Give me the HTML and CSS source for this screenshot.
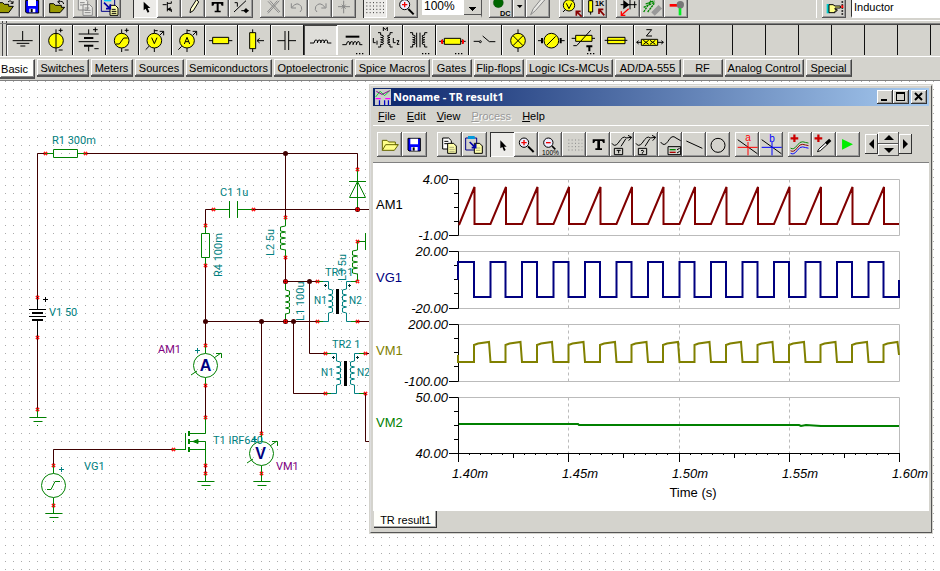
FILE: index.html
```html
<!DOCTYPE html>
<html lang="en">
<head>
<meta charset="utf-8">
<title>Schematic Editor</title>
<link rel="stylesheet" href="styles.css">
</head>
<body>
<header class="chrome">
  <div class="toolbar">
    <div class="group first">
      <button class="tool" aria-label="Open"><svg viewBox="-12 -18 72 72"><path class="folder" d="M-4 38V8H8l5 5H26V19H40L26 38Z"/><path class="k" d="M24 6q8-8 14 4m-6 0h7V3"/></svg></button>
      <button class="tool" aria-label="Save"><svg viewBox="60 -18 72 72"><path fill="#00f" stroke="#000" stroke-width="3" d="M77 1H116V39H80L77 36Z"/><path fill="#fff" d="M84 0h24v18H84zM88 26h18v11H88z"/><path fill="#000" d="M92 27h6v10h-6z"/></svg></button>
      <button class="tool" aria-label="Open example"><svg viewBox="132 -18 72 72"><path class="folder" d="M149 38V11h12l5 5h18v6h10L180 38Z"/><path class="k" d="M191 12q-2-12-16-6m4-6-6 6 7 5"/></svg></button>
    </div>
    <div class="group g4">
      <button class="tool" aria-label="Copy"><svg viewBox="219 -18 72 72"><path class="dim" fill="#e9e9e5" d="M235-4h20l8 8v26h-28zM249 14h20l8 8v24h-28zM254 24h14m-14 7h18m-18 7h18M240 8h14m-14 7h8"/></svg></button>
      <button class="tool" aria-label="Paste"><svg viewBox="291 -18 72 72"><path fill="#d4d3cd" stroke="#008" stroke-width="3" d="M304-2h40v36h-40z"/><path fill="#0cf" d="M312-6h22V4h-22z"/><path fill="#ffa" stroke="#000" stroke-width="3" d="M330 16h16l8 8v22h-24z"/><path class="k" d="M335 28h12m-12 6h14m-14 6h14"/><path stroke="#00a" stroke-width="5" d="m312 8 18 18m-12 0h13V13" fill="none"/></svg></button>
    </div>
    <div class="group g12">
      <button class="tool on" aria-label="Select"><svg viewBox="399 -18 72 72"><path d="M431 5v26l6-5 6 12 5-3-5-11h8z"/></svg></button>
      <button class="tool" aria-label="Last component"><svg viewBox="471 -18 72 72"><path class="k" d="M488 14h12m2-8v28m0-24h12m-12 18h12v8m0-26v-6"/><path d="m501 28 11-7v13z"/></svg></button>
      <button class="tool" aria-label="Wire"><svg viewBox="543 -18 72 72"><path class="k" fill="#fff" d="m590-2-18 28-2 12 10-6L596 6Z"/></svg></button>
      <button class="tool" aria-label="Text"><svg viewBox="615 -18 72 72"><path d="M635 6h35v11h-5l-3-6h-6v21h6v5h-18v-5h6V11h-7l-3 6h-5z"/></svg></button>
      <button class="tool" aria-label="Hide values"><svg viewBox="687 -18 72 72"><path class="k" d="m702 36 36-34M704 8h8v12m12 12h22"/><path d="m738 24 8 8-8 8-8-8z"/></svg></button>
    </div>
    <div class="group g7">
      <button class="tool" aria-label="Delete"><svg viewBox="780 -18 72 72"><path class="dim" d="m804 4 32 34M810 2l30 34M838 2l-34 38M832 2l-30 34"/></svg></button>
      <button class="tool" aria-label="Undo"><svg viewBox="852 -18 72 72"><path class="dim" d="M876 22q16-20 28-2 4 10-4 16M874 10v14h14"/></svg></button>
      <button class="tool" aria-label="Redo"><svg viewBox="-6 -18 72 72"><path class="dim" d="M45 22q-16-20-28-2-4 10 4 16M48 10v14H34"/></svg></button>
      <button class="tool" aria-label="Node"><svg viewBox="66 -18 72 72"><path class="dim" d="M84 20h36M101 2v38m-6-26 12 12m0-12-12 12"/></svg></button>
    </div>
    <div class="group g7">
      <button class="tool on" aria-label="Grid"><svg viewBox="163 -18 72 72"><path stroke="#333" stroke-width="3" stroke-dasharray="3 7" d="M173 8h55m-55 10h55m-55 10h55m-55 10h55"/></svg></button>
    </div>
    <div class="group g7">
      <button class="tool" aria-label="Zoom"><svg viewBox="256 -18 72 72"><circle cx="288" cy="14" r="15" fill="#eef" stroke="#000" stroke-width="3"/><path stroke="#e00" stroke-width="4" d="M280 14h16m-8-8v16"/><path stroke="#000" stroke-width="6" d="m299 27 16 16"/></svg></button>
      <select class="zoom" aria-label="Zoom level"><option>100%</option></select>
    </div>
    <div class="group g7">
      <button class="tool" aria-label="DC analysis"><svg viewBox="540 -18 72 72"><circle cx="568" cy="8" r="15" fill="#060" stroke="#141"/><text x="573" y="47" class="cap">DC</text></svg></button>
      <button class="tool slim" aria-label="Analysis menu"><svg viewBox="615 -18 36 72"><path d="M625 15h17l-8 9z"/></svg></button>
      <button class="tool" aria-label="Probe"><svg viewBox="654 -18 72 72"><path class="dim" fill="#eee" d="m668 44 8-18 26-32 8 6-28 32Z"/></svg></button>
    </div>
    <div class="group g9">
      <button class="tool" aria-label="Voltmeter pick"><svg viewBox="756 -18 72 72"><circle class="y" cx="786" cy="16" r="17"/><path class="k" d="m778 10 8 16 8-16M768 36l8-8m20-24 8-8"/><path stroke="#800" stroke-width="5" fill="none" d="m824 50-16-16m0 13V34h13"/></svg></button>
      <button class="tool" aria-label="Resistor pick"><svg viewBox="828 -18 72 72"><path class="y" d="M845 2h12v34h-12z"/><path class="k" d="M851-8V2m0 34v8"/><text x="864" y="19" class="cap">1K</text><path stroke="#800" stroke-width="5" fill="none" d="m892 46-16-18m0 14V28h13"/></svg></button>
    </div>
    <div class="group g9">
      <button class="tool" aria-label="Diode pick"><svg viewBox="-2 -18 72 72"><path d="M20 0v28l18-14z"/><path class="k" d="M12 14h48M40 0v28M54 4v20"/><path stroke="#f00" stroke-width="4" fill="none" d="M36 26 14 46m0-12v12h12"/></svg></button>
      <button class="tool" aria-label="Spray"><svg viewBox="73 -18 72 72"><path stroke="#080" stroke-width="4" stroke-dasharray="7 2" d="M84 36 106 2M90 12 116 2M84 22l34-16M96 36l20-26"/><path stroke="#999" stroke-width="15" d="m112 42 22-22"/></svg></button>
      <button class="tool" aria-label="Logic probe"><svg viewBox="148 -18 72 72"><path stroke="#f00" stroke-width="8" d="M165 16h22"/><path stroke="#0e2" stroke-width="8" d="M196 24v22"/><circle cx="197" cy="14" r="11" fill="#777"/></svg></button>
    </div>
    <div class="group find">
      <button class="tool" aria-label="Find component"><svg viewBox="621 -18 72 72"><path fill="#0cc" d="M635 12h8v28h-8z"/><path fill="#ff8" stroke="#000" stroke-width="3" d="M642 14h12l6 4h16v6h-16v4h6v5h-6v5h-18Z"/><path stroke="#000" stroke-width="5" stroke-dasharray="4 5" d="M682 4v40"/><path stroke="#f00" stroke-width="6" d="M682 16v8"/></svg></button>
      <input class="search" type="text" value="Inductor" aria-label="Component name">
    </div>
  </div>

  <div class="palette">
    <button class="part" aria-label="Ground"><svg viewBox="21 75 99 90"><path class="k" d="M68 93v29M38 122h60M50 130h38M61 138h15"/></svg></button>
    <button class="part" aria-label="Voltage source"><svg viewBox="120 75 99 90"><circle class="y" cx="168" cy="122" r="22"/><path class="k" d="M168 88v68M176 91h12m-6-6v12M176 150h12"/></svg></button>
    <button class="part" aria-label="Battery"><svg viewBox="219 75 99 90"><path class="k" d="M266 88v14M236 102h60M236 125h60M266 139v15M279 89h14m-7-7v14M283 146h13"/><path class="kk" d="M252 114h28M252 137h28"/></svg></button>
    <button class="part" aria-label="Generator"><svg viewBox="318 75 99 90"><circle class="y" cx="365" cy="122" r="22"/><path class="k" d="M365 88v12m0 44v12M348 132h10l13-18h12M374 91h12m-6-6v12M374 150h12"/></svg></button>
    <button class="part" aria-label="Voltmeter"><svg viewBox="417 75 99 90"><circle class="y" cx="463" cy="122" r="22"/><path class="k" d="m455 113 8 18 8-18M463 88v12m0 44v12M437 149l10-10M479 106l12-12m-12 0h12v12M463 92h10"/></svg></button>
    <button class="part" aria-label="Ammeter"><svg viewBox="516 75 99 90"><circle class="y" cx="561" cy="122" r="22"/><path class="k" d="m553 132 8-20 8 20m-13-7h10M561 88v12m0 44v12M535 149l10-10M578 106l12-12m-12 0h12v12M561 92h10"/></svg></button>
    <button class="part" aria-label="Resistor"><svg viewBox="615 75 99 90"><path class="k" d="M627 122h70"/><path class="y" d="M638 112h48v19h-48z"/></svg></button>
    <button class="part" aria-label="Potentiometer"><svg viewBox="714 75 99 90"><path class="k" d="M758 88v68M772 122h20m-13-7-8 7 8 7"/><path class="y" d="M749 98h18v48h-18z"/></svg></button>
    <button class="part" aria-label="Capacitor"><svg viewBox="813 75 99 90"><path class="k" d="M832 122h23M855 93v57M866 93v57M866 122h22"/></svg></button>
    <button class="part on" aria-label="Inductor"><svg viewBox="-18 75 99 90"><path class="k" d="M0 129h12q2-12 8-9 4 2 2 9q2-12 8-9 4 2 2 9q2-12 8-9 4 2 2 9q2-12 8-9 4 2 2 9h12"/></svg></button>
    <button class="part" aria-label="Core inductor"><svg viewBox="81 75 99 90"><path class="kk" d="M107 110h41"/><path class="k" d="M97 134h12q2-12 8-9 4 2 2 9q2-12 8-9 4 2 2 9q2-12 8-9 4 2 2 9q2-12 8-9 4 2 2 9h8"/><path class="dots" d="M138 161h23"/></svg></button>
    <button class="part" aria-label="Coupled inductors"><svg viewBox="180 75 99 90"><path class="k" d="M220 93V82l6 7 6-7v11M190 114v14h7M201 122v12M250 114v14h7M260 122h7l-6 11h7M204 98h8v7q10 0 8 6-2 3-8 1q10 0 8 6-2 3-8 1q10 0 8 6-2 3-8 1q10 0 8 6-2 3-8 1v8h-8M248 98h-8v7q-10 0-6 6 2 3 6 1q-10 0-6 6 2 3 6 1q-10 0-6 6 2 3 6 1q-10 0-6 6 2 3 6 1v8h8"/></svg></button>
    <button class="part" aria-label="Transformer"><svg viewBox="279 75 99 90"><path class="k" d="M320 98v44M330 98v44M300 98h8v7q10 0 7 6-2 3-7 1q10 0 7 6-2 3-7 1q10 0 7 6-2 3-7 1q10 0 7 6-2 3-7 1v8h-8M352 98h-8v7q-10 0-7 6 2 3 7 1q-10 0-7 6 2 3 7 1q-10 0-7 6 2 3 7 1q-10 0-7 6 2 3 7 1v8h8"/><path class="dots" d="M336 161h23"/></svg></button>
    <button class="part" aria-label="Thermal resistor"><svg viewBox="378 75 99 90"><path class="k" d="M387 124h80M398 118v14M457 118v14"/><path class="y" d="M403 115h49v18h-49z"/><path stroke="#f00" stroke-width="6" d="M396 119v12M459 119v12"/><path class="dots" d="M435 161h23"/></svg></button>
    <button class="part" aria-label="Switch"><svg viewBox="477 75 99 90"><path class="k" d="M491 124h16M518 108l20 17h18"/><circle class="k" cx="511" cy="125" r="3"/></svg></button>
    <button class="part" aria-label="Bulb"><svg viewBox="576 75 99 90"><circle class="y" cx="624" cy="122" r="22"/><path class="k" d="M624 88v12m0 44v12M609 107l30 30m0-30-30 30"/></svg></button>
    <button class="part" aria-label="Motor"><svg viewBox="675 75 99 90"><circle class="y" cx="724" cy="122" r="22"/><path class="k" d="M684 122h14m52 0h14M711 135l26-26"/><path class="kk" d="M696 114v16M752 114v16"/></svg></button>
    <button class="part" aria-label="Thermistor"><svg viewBox="774 75 99 90"><path class="k" d="M785 115h70"/><path class="y" d="M797 106h49v18h-49z"/><path class="k" d="M790 137h10l42-46"/><path class="kk" d="M829 139h18M838 139v15"/><path class="dots" d="M831 161h23"/></svg></button>
    <button class="part" aria-label="Fuse"><svg viewBox="873 75 99 90"><path class="y" d="M893 112h52v19h-52z"/><path class="k" d="M884 121h68"/></svg></button>
    <button class="part" aria-label="Impedance"><svg viewBox="42 75 99 90"><path class="k" d="M79 89h16L79 108h17M50 127h80m-74-5-6 5 6 5m68-10 6 5-6 5"/><path class="y" d="M64 118h49v18H64z"/><path class="k" d="m70 121 16 12m0-12-16 12m20-12 16 12m0-12-16 12"/></svg></button>
    <button class="part" aria-label="Empty slot 1"></button><button class="part" aria-label="Empty slot 2"></button><button class="part" aria-label="Empty slot 3"></button><button class="part" aria-label="Empty slot 4"></button><button class="part" aria-label="Empty slot 5"></button><button class="part" aria-label="Empty slot 6"></button><button class="part" aria-label="Empty slot 7"></button><button class="part" aria-label="Empty slot 8"></button><button class="part" aria-label="Empty slot 9"></button>
  </div>

  <nav class="tabs">
    <button class="tab current">Basic</button><button class="tab">Switches</button><button class="tab">Meters</button><button class="tab">Sources</button><button class="tab">Semiconductors</button><button class="tab">Optoelectronic</button><button class="tab">Spice Macros</button><button class="tab">Gates</button><button class="tab">Flip-flops</button><button class="tab">Logic ICs-MCUs</button><button class="tab">AD/DA-555</button><button class="tab">RF</button><button class="tab">Analog Control</button><button class="tab">Special</button>
  </nav>
</header>

<main class="canvas">
  <svg class="schematic" role="img" aria-label="Circuit schematic">
    <defs>
      <path id="pin" d="M-1-1h4M-1 1h4M0-2v4M2-2v4" stroke="#f00" fill="none" stroke-width="1" opacity=".7"/>
      <g id="gnd"><path d="M0 0v8M-8 8.500h17M-4 12.500h9M0 16v1" class="green"/></g>
      <path id="plus" d="M-2 0h5M.5-2.500v5"/>
    </defs>
    <g transform="translate(0 -81)">
      <g class="wire">
        <path d="M45 153.500H37.500V297M86 153.500H357.500V170M37.500 337V409M285.500 153V217M205.500 225V209.500H213M253 209.500H370M205.500 265V345M285.500 257V281.500H317M205.500 321.500H317M357 321.500H370M309.500 281V353.500H325M293.500 321V393.500H325M365.500 353.500H370M365.500 393V441.500H370M205.500 385V417M205.500 465V474M261.500 321V433M173 449.500H53.500V465"/>
      </g>
      <g class="black"><path d="M37.500 297V309M29 309.500H46M29 316.500H46M37.500 320V337M43 299.500h5M45.500 297v5"/><path stroke-width="2" d="M32 313H43M32 320H43"/></g>
      <g class="green">
        <path d="M45 153.500H53M78 153.500H86M53.500 149.500h24v8h-24zM213 209.500H229.500M229.500 201V218M237.500 201V218M237.500 209.500H253M205.500 225V233M205.500 258V265M201.500 233.500h8v24h-8z"/>
        <path d="M357.500 169V209M349 181.500H366M349.500 197.500h16l-8-16z"/>
        <path d="M285.500 217V226l-5 1v4l5 1-5 1v4l5 1-5 1v4l5 1-5 1v4l5 1V257"/>
        <path d="M285.500 281V290l4 1v4l-4 1 4 1v4l-4 1 4 1v4l-4 1 4 1v4l-4 1V321"/>
        <path d="M357.500 241V250l-5 1v4l5 1-5 1v4l5 1-5 1v4l5 1-5 1v4l5 1V281M357 241.500H365.500M365.500 233V250"/>
        <path d="M205.500 345V353M205.500 378V385M261.500 433V441M261.500 466V474M53.500 465V473M53.500 498V505"/>
        <circle cx="205.500" cy="365.500" r="12"/><circle cx="261.500" cy="453.500" r="12"/><circle cx="53.500" cy="485.500" r="12"/>
        <path d="M47 489.500h4l4-8h5M191 375l6-4M214 358l7-5M216 353.500h5.500V358M247 463l6-4M270 446l7-5M272 441.500h5.500V446"/>
        <path d="M205.500 417V433.500H189M185.500 433V450M173 449.500H185.500M189 441.500H205.500V465M189 449.500H205.500"/>
        <path stroke-width="2" d="M189 431v5M189 439v5M189 447v5"/><path fill="#008000" d="m193 441.500 5-2v4z"/>
      </g>
      <use href="#gnd" x="37.500" y="409"/><use href="#gnd" x="53.500" y="505"/><use href="#gnd" x="205.500" y="473"/><use href="#gnd" x="261.500" y="473"/>
      <g class="teal">
        <path id="trl" d="M317 281.500H328.500V289l4 1v4l-4 1 4 1v4l-4 1 4 1v4l-4 1 4 1v4l-4 1V321.500H317"/>
        <path id="trr" d="M357 281.500H346.500V289l-4 1v4l4 1-4 1v4l4 1-4 1v4l4 1-4 1v4l4 1V321.500H357"/>
        <use href="#trl" x="8" y="72"/><use href="#trr" x="8" y="72"/>
        <use href="#plus" x="61" y="469.500"/><use href="#plus" x="197" y="350.500"/><use href="#plus" x="254" y="439.500"/>
      </g>
      <path class="green" d="M317 281.500h6M317 321.500h6M351 281.500h6M351 321.500h6M325 353.500h6M325 393.500h6M359 353.500h6M359 393.500h6"/>
      <path d="M336 289h3v25h-3zM344 361h3v25h-3z"/>
      <path class="mark" d="M324 285.500h3M325.500 284v3M348 285.500h3M349.500 284v3M332 357.500h3M333.500 356v3M356 357.500h3M357.500 356v3"/>
      <g fill="#400000"><circle cx="285.500" cy="153.500" r="2.500"/><circle cx="357.500" cy="209.500" r="2.500"/><circle cx="285.500" cy="281.500" r="2.500"/><circle cx="309.500" cy="281.500" r="2.500"/><circle cx="205.500" cy="321.500" r="2.500"/><circle cx="261.500" cy="321.500" r="2.500"/><circle cx="285.500" cy="321.500" r="2.500"/><circle cx="293.500" cy="321.500" r="2.500"/></g>
      <g id="pins"></g>
      <g class="label">
        <text x="52" y="144">R1 300m</text><text x="49" y="316">V1 50</text><text x="220" y="196">C1 1u</text><text x="84" y="470">VG1</text>
        <text x="325" y="276">TR1 1</text><text x="332" y="348">TR2 1</text><text x="213" y="444">T1 IRF640</text>
        <text transform="translate(222 277) rotate(-90)">R4 100m</text><text transform="translate(274 256) rotate(-90)">L2 5u</text><text transform="translate(304 321) rotate(-90)">L1 100u</text><text transform="translate(346 281) rotate(-90)">L3 5u</text>
      </g>
      <g class="label small"><text x="314" y="304">N1</text><text x="349" y="304">N2</text><text x="321" y="376">N1</text><text x="357" y="376">N2</text></g>
      <g class="label meter"><text x="158" y="353">AM1</text><text x="276" y="470">VM1</text></g>
      <g class="letter"><text x="205.500" y="371">A</text><text x="260.500" y="459">V</text></g>
    </g>
  </svg>

  <section class="window" aria-label="TR result">
    <div class="titlebar">
      <svg class="appicon" viewBox="28 15 50 50"><path fill="#ccc" d="M28 15h50v50H28z"/><path fill="none" stroke="#0d2" stroke-width="3" d="M30 40 44 22l14 14 16-16"/><path fill="none" stroke="#808" stroke-width="3" d="m32 22 18 10 24-12"/><path stroke="#f0f" stroke-width="4" d="M30 45h16m14 0h16"/><path stroke="#00c" stroke-width="4" d="M42 50v15M58 50v15M70 50v15"/></svg>
      <h1>Noname - TR result1</h1>
      <button class="winbtn" aria-label="Minimize"><svg viewBox="0 0 16 14"><path d="M4 9h6v2H4z"/></svg></button>
      <button class="winbtn" aria-label="Maximize"><svg viewBox="0 0 16 14"><path d="M3 2h9v9H3zM4 4v6h7V4z" fill-rule="evenodd"/></svg></button>
      <button class="winbtn close" aria-label="Close"><svg viewBox="0 0 16 14"><path d="m4 3 7 7m0-7-7 7" stroke="#000" stroke-width="2"/></svg></button>
    </div>
    <div class="menu">
      <button><u>F</u>ile</button><button><u>E</u>dit</button><button><u>V</u>iew</button><button disabled><u>P</u>rocess</button><button><u>H</u>elp</button>
    </div>
    <div class="wintools">
      <div class="group">
        <button class="tool" aria-label="Open"><svg viewBox="36 150 75 75"><path fill="#ff8" stroke="#660" stroke-width="3" d="M52 205V175h14l5 5h20v8h9l-12 17zM52 205l10-17h36"/></svg></button>
        <button class="tool" aria-label="Save"><svg viewBox="111 150 75 75"><path fill="#00f" stroke="#000" stroke-width="3" d="M129 169h37v38h-34l-3-3z"/><path fill="#fff" d="M136 170h23v17h-23zM139 195h19v11h-19z"/><path d="M143 196h6v10h-6z"/></svg></button>
      </div>
      <div class="group w9">
        <button class="tool" aria-label="Copy"><svg viewBox="213 150 75 75"><path fill="#fff" stroke="#000" stroke-width="3" d="M230 168h18l8 8v25h-26zM235 178h12m-12 7h12"/><path fill="#ffa" stroke="#000" stroke-width="3" d="M245 184h18l8 8v22h-26z"/><path stroke="#886" stroke-width="2" d="M250 196h14m-14 6h16m-16 6h16"/></svg></button>
        <button class="tool" aria-label="Paste"><svg viewBox="288 150 75 75"><path fill="#d4d3cd" stroke="#008" stroke-width="3" d="M299 168h33v36h-33z"/><path fill="#09d" d="M306 162h20v9h-20z"/><path fill="#ffa" stroke="#000" stroke-width="3" d="M325 184h16l8 8v22h-24z"/><path stroke="#886" stroke-width="2" d="M330 198h13m-13 7h13"/><path fill="none" stroke="#00a" stroke-width="5" d="m311 180 17 17m-11 0h12v-12"/></svg></button>
      </div>
      <div class="group w3">
        <button class="tool on" aria-label="Pointer"><svg viewBox="373 150 72 75"><path d="M404 175v24l6-4 5 12 5-3-5-10h8z"/></svg></button>
        <button class="tool" aria-label="Zoom in"><svg viewBox="445 150 72 75"><circle cx="475" cy="182" r="14" fill="#eef" stroke="#000" stroke-width="3"/><path stroke="#e00" stroke-width="4" d="M467 182h16m-8-8v16"/><path stroke="#000" stroke-width="6" d="m487 193 17 17"/></svg></button>
        <button class="tool" aria-label="Zoom 100%"><svg viewBox="517 150 72 75"><circle cx="548" cy="182" r="14" fill="#eef" stroke="#000" stroke-width="3"/><path stroke="#e00" stroke-width="4" d="M541 182h14"/><path stroke="#000" stroke-width="5" d="m559 192 10 10"/><text x="529" y="219" class="tiny">100%</text></svg></button>
        <button class="tool" aria-label="Grid"><svg viewBox="589 150 72 75"><path stroke="#888" stroke-width="3" stroke-dasharray="3 7" d="M608 174h42m-42 10h42m-42 10h42m-42 10h42"/></svg></button>
        <button class="tool" aria-label="Text"><svg viewBox="661 150 72 75"><path d="M681 172h36v11h-4l-4-6h-6v22h6v5h-20v-5h6v-22h-6l-4 6h-4z"/></svg></button>
        <button class="tool" aria-label="Text on curve"><svg viewBox="733 150 72 75"><path class="k" d="M739 184q7 12 18 0 16-26 24-16l16-2m-10-6 11 6-9 10m-9-5-14 22M746 199h25v19h-25zM753 205h12m-6 0v9"/></svg></button>
        <button class="tool" aria-label="Query curve"><svg viewBox="805 150 72 75"><path class="k" d="M811 184q7 12 18 0 16-26 24-16l16-2m-10-6 11 6-9 10m-9-5-14 22M818 199h25v19h-25zM826 206q8-4 8 3l-4 3v3"/></svg></button>
        <button class="tool" aria-label="Legend"><svg viewBox="22 150 72 75"><path class="k" d="M30 180q10 16 22-2 12-22 24-10l14 8M52 194h38v24H52zM79 203l8-4m-8 14 8-5"/><path stroke="#080" stroke-width="4" d="M57 203h18"/><path stroke="#a00" stroke-width="4" d="M57 211h18"/></svg></button>
        <button class="tool" aria-label="Line"><svg viewBox="94 150 72 75"><path class="k" d="m107 177 48 22"/></svg></button>
        <button class="tool" aria-label="Circle"><svg viewBox="166 150 72 75"><circle class="k" cx="202" cy="190" r="21"/></svg></button>
      </div>
      <div class="group w5">
        <button class="tool" aria-label="Cursor a"><svg viewBox="253 150 72 75"><path class="k" d="m261 173 59 42"/><path stroke="#f00" stroke-width="3" d="M261 196h60M292 180v40"/><text x="284" y="178" class="cur" fill="#f00">a</text></svg></button>
        <button class="tool" aria-label="Cursor b"><svg viewBox="325 150 72 75"><path class="k" d="m333 173 59 42"/><path stroke="#00f" stroke-width="3" d="M333 196h60M364 180v40"/><text x="356" y="179" class="cur" fill="#00f">b</text></svg></button>
      </div>
      <div class="group w5">
        <button class="tool" aria-label="Add curves"><svg viewBox="412 150 75 75"><path stroke="#c00" stroke-width="7" d="M420 168h24m-12-12v24"/><g fill="none" stroke-width="3"><path stroke="#080" d="M420 199q10 6 20-8t18-12 18 4"/><path stroke="#800" d="M420 207q10 6 20-8t18-12 18 4"/><path stroke="#00f" d="M420 215q10 6 20-8t18-12 18 4"/></g></svg></button>
        <button class="tool" aria-label="Pick curve"><svg viewBox="487 150 75 75"><path stroke="#c00" stroke-width="7" d="M495 168h24m-12-12v24"/><path fill="#fff" stroke="#000" stroke-width="3" d="m504 210 4-8 22-20 5 5-22 20z"/><path stroke="#000" stroke-width="10" d="m531 185 13-12"/></svg></button>
        <button class="tool" aria-label="Run"><svg viewBox="562 150 75 75"><path fill="#0e0" d="M581 170v34l34-17z"/></svg></button>
      </div>
      <div class="group w5 spin">
        <button class="side" aria-label="Left"><svg viewBox="0 0 13 20"><path d="M9 5v10l-5-5z"/></svg></button>
        <div class="updown"><button aria-label="Up"><svg viewBox="0 0 21 12"><path d="M6 8h10l-5-5z"/></svg></button><button aria-label="Down"><svg viewBox="0 0 21 12"><path d="M6 4h10l-5 5z"/></svg></button></div>
        <button class="side" aria-label="Right"><svg viewBox="0 0 13 20"><path d="M4 5v10l5-5z"/></svg></button>
      </div>
    </div>
    <svg class="plots" id="plots" viewBox="373 163 556 348" role="img" aria-label="Transient result diagrams"></svg>
    <div class="sheets"><button class="sheet">TR result1</button></div>
  </section>
</main>
<script src="plots.js"></script>
</body>
</html>
```
FILE: plots.js
```js
const LEFT = 458.5, RIGHT = 899.5, PERIOD = 31.5;

const rows = [
  { name: "AM1", color: "#000", line: "#800000", top: 179.5, bottom: 235.5, hi: "4.00", lo: "-1.00" },
  { name: "VG1", color: "#000080", line: "#000080", top: 251.5, bottom: 308.5, hi: "20.00", lo: "-20.00" },
  { name: "VM1", color: "#808000", line: "#808000", top: 324.5, bottom: 381.5, hi: "200.00", lo: "-100.00" },
  { name: "VM2", color: "#008000", line: "#008000", top: 397.5, bottom: 453.5, hi: "50.00", lo: "40.00" }
];

const traces = { AM1: "M459 225", VG1: "M458 280V262", VM1: "M458 355V362", VM2: "M459 424H578L579 425H799L801 426L806 425L821 426H899" };
for (let k = 0; k < 14; k++) {
  const x = 459 + k * PERIOD, end = Math.min(x + PERIOD, 899);
  traces.AM1 += `L${x + 15.5} 187V224H${end}`;
  traces.VG1 += `H${x + 15}V297H${end}` + (k < 13 ? "V262" : "V280");
  traces.VM1 += `H${x + 15}V345L${x + 19} 343.5L${end - 1.5} 342L${end} ` + (k < 13 ? "362" : "355");
}

let out = "";
for (const r of rows) {
  const step = (r.bottom - r.top) / 4;
  out += `<path class="frame" d="M${LEFT} ${r.top}H${RIGHT}V${r.bottom}H${LEFT}"/>`;
  for (const x of [568.5, 679.5, 789.5]) out += `<path class="grid" d="M${x} ${r.top}V${r.bottom}"/>`;
  out += `<path class="axis" d="M449 ${r.top}H${LEFT}V${r.bottom}H449`;
  for (let i = 1; i < 4; i++) out += `M454 ${Math.round(r.top + i * step) - 0.5}H${LEFT}`;
  out += `"/><path class="trace" stroke="${r.line}" d="${traces[r.name]}"/>`;
  out += `<text class="name" x="376" y="${(r.top + r.bottom) / 2 - 1.5}" fill="${r.color}">${r.name}</text>`;
  out += `<text class="scale end" x="448" y="${r.top + 4.5}">${r.hi}</text><text class="scale end" x="448" y="${r.bottom + 4.5}">${r.lo}</text>`;
}

let ticks = `M${LEFT} 453.5H${RIGHT}`;
for (let i = 0; i <= 40; i++) {
  const x = Math.round(458 + i * 11.025) + 0.5;
  ticks += `M${x} 453V${i % 10 === 0 ? 462 : i % 5 === 0 ? 458 : 455}`;
}
out += `<path class="axis" d="${ticks}"/>`;
["1.40m", "1.45m", "1.50m", "1.55m", "1.60m"].forEach((t, i) => {
  out += `<text class="scale mid" x="${470 + i * 110}" y="478">${t}</text>`;
});
out += `<text class="title" x="693" y="497">Time (s)</text>`;
document.getElementById("plots").innerHTML = out;

const pins = [[45, 153], [85, 153], [37, 297], [37, 337], [37, 409], [53, 465], [53, 505], [173, 449], [213, 209], [253, 209], [205, 225], [205, 265],
  [285, 217], [285, 257], [285, 281], [285, 321], [317, 281], [317, 321], [357, 169], [357, 209], [357, 241], [357, 281], [357, 321],
  [325, 353], [325, 393], [365, 353], [365, 393], [205, 345], [205, 385], [205, 417], [205, 465], [205, 473], [261, 433], [261, 473]];
document.getElementById("pins").innerHTML = pins.map(([x, y]) => `<use href="#pin" x="${x - 0.5}" y="${y + 0.5}"/>`).join("");
```
FILE: styles.css
```css
* { box-sizing: border-box; }

body {
  margin: 0;
  min-height: 100vh;
  display: flex;
  flex-direction: column;
  overflow: hidden;
  font: 11px/14px "Liberation Sans", Arial, sans-serif;
  color: #000;
  background: #fff;
}

button, input, select {
  font: inherit;
  color: inherit;
  border: 0;
  border-radius: 0;
  padding: 0;
  margin: 0;
  background: #d4d3cd;
}

button svg { display: block; width: 100%; height: 100%; }

.chrome { background: #d4d3cd; border-bottom: 1px solid #808080; }

.toolbar {
  display: flex;
  align-items: flex-end;
  height: 20px;
  padding-bottom: 2px;
  overflow: hidden;
}

.group { display: flex; flex: none; align-items: flex-end; }
.first { margin-left: -4px; }
.g4 { margin-left: 5px; }
.g7 { margin-left: 7px; }
.g9 { margin-left: 9px; }
.g12 { margin-left: 12px; }

.find {
  flex: 1;
  margin-left: 128px;
  padding-left: 5px;
  border-left: 1px solid #fff;
}

.tool {
  flex: none;
  width: 24px;
  height: 24px;
  overflow: hidden;
  box-shadow: inset -1px -1px #555, inset 1px 1px #fff, inset -2px -2px #999;
}

.slim { width: 13px; }
.on { background: #ecebe8; box-shadow: inset 1px 1px #333, inset -1px -1px #fff; }

.zoom {
  width: 60px;
  height: 22px;
  margin-left: 4px;
  padding: 0 0 0 2px;
  font-size: 12px;
  appearance: none;
  background: linear-gradient(#000, #000) 47px 11px / 7px 1px no-repeat,
    linear-gradient(#000, #000) 48px 12px / 5px 1px no-repeat,
    linear-gradient(#000, #000) 49px 13px / 3px 1px no-repeat,
    linear-gradient(#000, #000) 50px 14px / 1px 1px no-repeat,
    linear-gradient(#555, #555) 42px 18px / 18px 1px no-repeat,
    linear-gradient(90deg, transparent 42px, #d4d3cd 42px) #fff;
  border-right: 1px solid #555;
  border-bottom: 3px solid #d4d3cd;
}

.search {
  flex: 1;
  min-width: 40px;
  height: 21px;
  margin-left: 5px;
  padding: 0 2px;
  border-left: 1px solid #333;
  border-bottom: 2px solid #fff;
  background: #fff;
}

.k { fill: none; stroke: #000; stroke-width: 3; }
.k[fill] { fill: #ffc; }
.kk { fill: none; stroke: #000; stroke-width: 6; }
.y { fill: #ff0; stroke: #000; stroke-width: 3; }
.dots { stroke: #000; stroke-width: 4; stroke-dasharray: 4 5; }
.dim { fill: none; stroke: #888; stroke-width: 3; }
.dim[fill] { fill: #e9e9e5; }
.folder { fill: #990; stroke: #000; stroke-width: 3; }
.cap { font-size: 22px; font-weight: bold; }
.tiny { font-size: 20px; }
.cur { font-size: 30px; }

.palette {
  display: flex;
  height: 36px;
  padding: 3px 0 0 7px;
  border-top: 1px solid #fff;
  overflow: hidden;
  background: linear-gradient(#808080, #808080) 0 2px / 100% 1px no-repeat,
    linear-gradient(90deg, transparent 2px, #444 2px, #444 3px, transparent 3px, transparent 6px, #444 6px, #444 7px, transparent 7px);
}

.part {
  flex: none;
  width: 33px;
  height: 31px;
  box-shadow: inset 0 1px #444, inset -1px 0 #111, inset 1px 2px #fff;
}
.part:empty { box-shadow: inset 0 1px #444, inset -1px 0 #111; }
.part svg { width: 33px; height: 30px; }
.part.on { box-shadow: inset 1px 2px #444, inset -1px 0 #fff; background: #dfdeda; }

.tabs {
  display: grid;
  grid-template-columns: 35px 52px 42px 49px 86px 79px 75px 40px 50px 87px 66px 40px 79px 46px;
  column-gap: 2px;
  height: 24px;
  padding-top: 2px;
  border-top: 1px solid #fff;
}

.tab {
  height: 18px;
  white-space: nowrap;
  border-top: 1px solid #fff;
  border-right: 1px solid #444;
  border-bottom: 2px solid #555;
  box-shadow: inset 1px 0 #fff, inset -1px -1px #888;
}
.tab.current {
  height: 20px;
  background: #fffffb;
  padding-right: 5px;
}

.canvas {
  position: relative;
  flex: 1;
  min-height: 490px;
  background: linear-gradient(90deg, #fff 7px, transparent 7px) -2px 0 / 8px 8px,
    linear-gradient(#aaa 1px, #fff 1px) 0 0 / 8px 8px;
}
.schematic { position: absolute; left: 0; top: 0; width: 100%; height: 100%; }

.wire { fill: none; stroke: #400000; }
.black { fill: none; stroke: #000; }
.mark { fill: none; stroke: #033; }
.green { fill: none; stroke: #008000; }
.teal { fill: none; stroke: #008080; }
.label { font: 11px Roboto, "Liberation Sans", sans-serif; fill: #008080; }
.small { font-size: 10px; }
.meter { fill: #800080; }
.letter { font: bold 16px "Liberation Sans", sans-serif; fill: #000080; text-anchor: middle; }

.window {
  position: absolute;
  left: 369px;
  right: 7px;
  top: 3px;
  padding: 2px;
  border: 2px solid;
  border-color: #eee #555 #555 #ddd;
  background: #d4d3cd;
  outline: 1px solid #d4d3cd;
  outline-offset: -1px;
}

.titlebar {
  display: flex;
  align-items: center;
  height: 18px;
  padding: 0 2px;
  color: #fff;
  background: linear-gradient(90deg, #0a246a, #a6caf0);
}
.appicon { width: 16px; height: 16px; }
.titlebar h1 {
  flex: 1;
  margin: 0 0 0 2px;
  font: bold 11px/18px "Noto Sans", sans-serif;
}
.winbtn {
  width: 16px;
  height: 14px;
  box-shadow: inset -1px -1px #333, inset 1px 1px #fff, inset -2px -2px #999;
}
.close { margin-left: 2px; }

.menu {
  display: flex;
  gap: 11px;
  height: 20px;
  padding-left: 5px;
  border-bottom: 1px solid #fff;
}
.menu button { white-space: nowrap; }
.menu button:disabled { color: #999; text-shadow: 1px 1px #fff; }

.wintools {
  display: flex;
  align-items: center;
  height: 37px;
  padding-left: 4px;
  border-bottom: 1px solid #808080;
}
.wintools .tool { height: 25px; }
.w3 { margin-left: 4px; }
.w5 { margin-left: 5px; }
.w9 { margin-left: 10px; }
.wintools .group:first-child .tool, .w9 .tool { width: 25px; }
.w9 + .w3 { margin-left: 3px; }
.spin { align-items: center; }
.side { width: 13px; height: 20px; box-shadow: inset -1px -1px #333, inset 1px 1px #fff; }
.updown { display: grid; width: 21px; }
.updown button { height: 12px; box-shadow: inset -1px -1px #555, inset 1px 1px #fff; }

.plots { display: block; width: 100%; background: #fff; }
.plots text { font: 13px "Liberation Sans", sans-serif; }
.plots .name { dominant-baseline: middle; }
.plots .scale { font-style: italic; }
.end { text-anchor: end; }
.mid, .title { text-anchor: middle; }
.frame { fill: none; stroke: #bbb; }
.grid { stroke: #bbb; stroke-dasharray: 3 3; }
.axis { fill: none; stroke: #000; }
.trace { fill: none; stroke-width: 2; }

.sheets { display: flex; height: 19px; padding-left: 1px; }
.sheet {
  width: 63px;
  height: 17px;
  background: #fffffb;
  box-shadow: inset -1px -1px #333, inset -2px -2px #aaa;
}
```
